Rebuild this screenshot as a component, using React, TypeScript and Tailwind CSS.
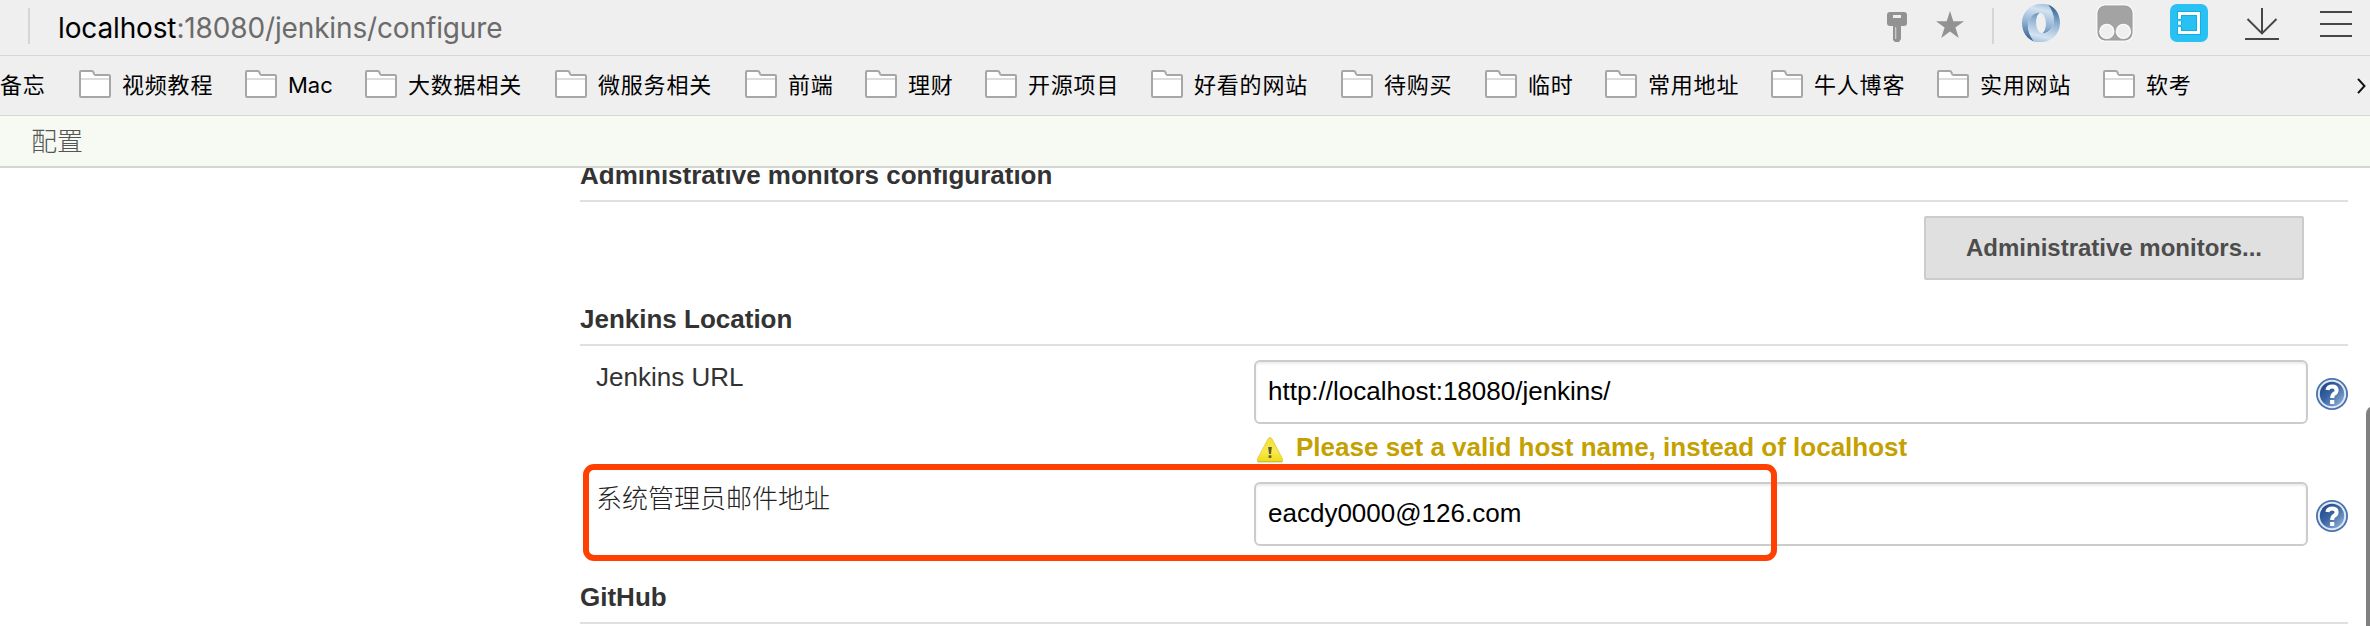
import React from "react";

const bookmarks = [
  { name: "视频教程", width: "w-[166px]" },
  { name: "Mac", width: "w-[120px] tracking-[0px]" },
  { name: "大数据相关", width: "w-[190px]" },
  { name: "微服务相关", width: "w-[190px]" },
  { name: "前端", width: "w-[120px]" },
  { name: "理财", width: "w-[120px]" },
  { name: "开源项目", width: "w-[166px]" },
  { name: "好看的网站", width: "w-[190px]" },
  { name: "待购买", width: "w-[144px]" },
  { name: "临时", width: "w-[120px]" },
  { name: "常用地址", width: "w-[166px]" },
  { name: "牛人博客", width: "w-[166px]" },
  { name: "实用网站", width: "w-[166px]" },
  { name: "软考", width: "w-[120px]" },
];

function FolderIcon() {
  return (
    <svg className="block shrink-0" width="32" height="28" viewBox="0 0 32 28">
      <path d="M1 26V2.2Q1 1 2.2 1H12.6Q14 1 14.6 2.6L15 4Q15.4 5 16.6 5H29.8Q31 5 31 6.2V25.8Q31 27 29.8 27H2.2Q1 27 1 25.8Z" fill="#fff" stroke="#a6a6a6" strokeWidth="2" />
      <path d="M2 9H30" stroke="#dcdcdc" strokeWidth="2" />
    </svg>
  );
}

function KeyIcon() {
  return (
    <svg className="block" width="20" height="30" viewBox="0 0 20 30">
      <path fillRule="evenodd" d="M3 0H17Q20 0 20 3V11Q20 14 17 14H14V27L12 30H8L6 28V14H3Q0 14 0 11V3Q0 0 3 0ZM6 3V6H14V3ZM8.4 15V27H9.2V15Z" fill="#929292" />
    </svg>
  );
}

function StarIcon() {
  return (
    <svg className="block" width="28" height="28" viewBox="0 0 28 28">
      <path d="M14 0L17.3 10.2H28L19.4 16.6L22.8 27L14 20.6L5.2 27L8.6 16.6L0 10.2H10.7Z" fill="#929292" />
    </svg>
  );
}

const swirlArm =
  "M26 0.5C12 -3 0 6 0 19C0 28 5 35 12 37.5C7 31 5 24 6.5 18C8 12 13 8.5 18 8.7C25.5 10 25.5 27 20 29.3C25 29.5 30 26 31.5 20C33 14 31 7 26 0.5Z";

function SwirlIcon() {
  return (
    <svg className="block" width="38" height="38" viewBox="0 0 38 38">
      <defs>
        <linearGradient id="swirl" x1="0.6" y1="0" x2="0.4" y2="1">
          <stop offset="0" stopColor="#a9c6e0" />
          <stop offset="0.15" stopColor="#d3e3f1" />
          <stop offset="0.55" stopColor="#8fb2d4" />
          <stop offset="1" stopColor="#34618f" />
        </linearGradient>
      </defs>
      <path d={swirlArm} fill="url(#swirl)" />
      <path d={swirlArm} fill="url(#swirl)" transform="rotate(180 19 19)" />
    </svg>
  );
}

function GoggleIcon() {
  return (
    <svg className="block" width="38" height="38" viewBox="0 0 38 38">
      <rect x="1" y="1" width="36" height="36" rx="8" fill="#a3a3a3" stroke="#fafafa" strokeWidth="1.5" />
      <rect x="2" y="2" width="34" height="34" rx="7" fill="none" stroke="#999" strokeWidth="0.8" />
      <circle cx="10.8" cy="27.4" r="7" fill="#efefef" stroke="#fafafa" strokeWidth="1.4" />
      <circle cx="27.4" cy="27.4" r="7" fill="#efefef" stroke="#fafafa" strokeWidth="1.4" />
    </svg>
  );
}

function CaptureIcon() {
  return (
    <svg className="block" width="38" height="38" viewBox="0 0 38 38">
      <rect width="38" height="38" rx="7" fill="#29c1f4" />
      <path d="M9.5 15.5V9.5H28.5V28.5H9.5V22.5M9.5 17V21" fill="none" stroke="#12aee4" strokeWidth="5" />
      <path d="M9.5 15V9.5H28.5V28.5H9.5V23M9.5 17.2V20.8" fill="none" stroke="#fff" strokeWidth="3" />
    </svg>
  );
}

function DownloadIcon() {
  return (
    <svg className="block" width="34" height="32" viewBox="0 0 34 32" fill="none" stroke="#464646" strokeWidth="2">
      <path d="M17 0V25M2.5 11L17 25.4L31.5 11M0 31H34" />
    </svg>
  );
}

function MenuIcon() {
  return (
    <svg className="block" width="32" height="26" viewBox="0 0 32 26" stroke="#464646" strokeWidth="2">
      <path d="M0 1H32M0 13H32M0 25H32" />
    </svg>
  );
}

function WarningIcon() {
  return (
    <svg className="block shrink-0" width="28" height="27" viewBox="0 0 28 27">
      <defs>
        <linearGradient id="warn" x1="0" y1="0" x2="0" y2="1">
          <stop offset="0" stopColor="#f3df3c" />
          <stop offset="0.6" stopColor="#f7e94f" />
          <stop offset="1" stopColor="#efdc12" />
        </linearGradient>
      </defs>
      <path d="M14 1.5Q15.3 1.5 16 3L26.6 23Q27.4 25.6 25 25.6H3Q0.6 25.6 1.4 23L12 3Q12.7 1.5 14 1.5Z" fill="url(#warn)" stroke="#e3d24a" strokeWidth="1" />
      <path d="M1.5 25.8H26.5" stroke="#c3b228" strokeWidth="1" />
      <path d="M12.2 11H15.8L15 18H13Z" fill="#5d5a2c" />
      <rect x="12.6" y="19.3" width="2.8" height="2.6" fill="#5d5a2c" />
    </svg>
  );
}

function HelpIcon({ id }: { id: string }) {
  return (
    <svg className="block shrink-0" width="32" height="32" viewBox="0 0 32 32">
      <defs>
        <linearGradient id={id} x1="0.1" y1="0.1" x2="0.9" y2="0.9">
          <stop offset="0" stopColor="#1f4788" />
          <stop offset="0.45" stopColor="#3a65a3" />
          <stop offset="1" stopColor="#8fb0d8" />
        </linearGradient>
      </defs>
      <circle cx="16" cy="16" r="16" fill="#4a72ad" />
      <circle cx="16" cy="16" r="13.2" fill={`url(#${id})`} stroke="#dfe8f3" strokeWidth="2" />
      <path d="M11.4 12Q12 8.4 16.2 8.4Q20.6 8.4 20.6 12Q20.6 14.4 18.2 15.8Q16.2 17 16.2 20" fill="none" stroke="#fff" strokeWidth="4" />
      <rect x="14.1" y="22" width="4.2" height="4" fill="#fff" />
    </svg>
  );
}

function SectionTitle({ children }: { children: React.ReactNode }) {
  return (
    <h2 className="h-[42px] shrink-0 border-b-2 border-[#e0e0e0] text-[26px] leading-[30px] font-bold text-[#333]">
      {children}
    </h2>
  );
}

function TextField({ value }: { value: string }) {
  return (
    <div className="flex h-16 w-[1054px] items-center rounded-[6px] border-2 border-[#ccc] bg-white pb-[2px] pl-[12px] text-[26px] leading-[30px] text-black shadow-[inset_0_2px_2px_rgba(0,0,0,0.075)]">
      {value}
    </div>
  );
}

export default function App() {
  return (
    <div className="relative flex h-[626px] w-[2370px] flex-col overflow-hidden bg-white font-['Liberation_Sans','Noto_Sans_CJK_SC',sans-serif]">
      <header className="flex h-14 shrink-0 items-start border-b border-[#d6d6d6] bg-[#efefef]">
        <div className="mt-2 ml-7 h-9 w-0.5 bg-[#d6d6d6]" />
        <div className="mt-2 ml-7 font-['Inter',sans-serif] text-[28px] leading-[40px] tracking-[-0.14px] whitespace-nowrap text-[#6b6b6b]">
          <span className="text-black">localhost</span>:18080/jenkins/configure
        </div>
        <div className="ml-auto flex items-start pr-[18px]">
          <div className="mt-3 w-[49px]"><KeyIcon /></div>
          <div className="mt-[11px] w-14"><StarIcon /></div>
          <div className="mt-2 mr-7 h-9 w-0.5 bg-[#d6d6d6]" />
          <div className="mt-1 w-[74px]"><SwirlIcon /></div>
          <div className="mt-1 w-[74px]"><GoggleIcon /></div>
          <div className="mt-1 w-[75px]"><CaptureIcon /></div>
          <div className="mt-2 w-[75px]"><DownloadIcon /></div>
          <div className="mt-[11px]"><MenuIcon /></div>
        </div>
      </header>

      <nav className="flex h-[60px] shrink-0 items-center border-b border-[#d6d6d6] bg-[#efefef] font-['Inter','Noto_Sans_CJK_SC',sans-serif] text-[22px] leading-[30px] tracking-[0.8px] whitespace-nowrap text-black">
        <div className="w-[79px] pb-px">备忘</div>
        {bookmarks.map((b) => (
          <div key={b.name} className={`flex shrink-0 items-center gap-[11px] pb-[3px] ${b.width}`}>
            <FolderIcon />
            <span className="pt-[2px]">{b.name}</span>
          </div>
        ))}
        <svg className="mt-px mr-1 ml-auto block" width="9" height="16" viewBox="0 0 9 16" fill="none" stroke="#111" strokeWidth="2">
          <path d="M1 0.8L7.5 8L1 15.2" />
        </svg>
      </nav>

      <div className="flex h-[52px] shrink-0 items-center border-b-2 border-[#d3d6cf] bg-[#f6faf2] pt-[2px] pl-[31px] text-[26px] leading-[40px] font-light text-[#555]">
        配置
      </div>

      <main className="flex h-[458px] shrink-0 flex-col overflow-hidden pr-[22px] pl-[580px]">
        <div className="-mt-2 shrink-0">
          <SectionTitle>Administrative monitors configuration</SectionTitle>
        </div>
        <div className="mt-[14px] mr-11 flex h-16 w-[380px] shrink-0 items-center justify-center self-end rounded-[2px] border-2 border-[#ccc] bg-[#e0e0e0] text-[24px] leading-[28px] font-bold text-[#4d4d4d]">
          Administrative monitors...
        </div>
        <div className="mt-6 shrink-0">
          <SectionTitle>Jenkins Location</SectionTitle>
        </div>
        <div className="mt-[14px] flex h-[122px] shrink-0 items-start">
          <div className="w-[674px] pt-[2px] pl-[16px] text-[26px] leading-[30px] text-[#333]">Jenkins URL</div>
          <div className="flex flex-col">
            <TextField value="http://localhost:18080/jenkins/" />
            <div className="mt-[12px] flex items-start pl-[2px]">
              <WarningIcon />
              <span className="-mt-[4px] ml-[12px] text-[26px] leading-[30px] font-bold whitespace-nowrap text-[#c4a000]">Please set a valid host name, instead of localhost</span>
            </div>
          </div>
          <div className="mt-[18px] ml-2"><HelpIcon id="helpUrl" /></div>
        </div>
        <div className="flex h-[100px] shrink-0 items-start">
          <div className="w-[674px] pt-px pl-[16px] text-[26px] leading-[32px] font-light text-[#222]">系统管理员邮件地址</div>
          <TextField value="eacdy0000@126.com" />
          <div className="mt-[18px] ml-2"><HelpIcon id="helpMail" /></div>
        </div>
        <SectionTitle>GitHub</SectionTitle>
      </main>

      <div className="absolute top-[464px] left-[583px] h-[97px] w-[1194px] rounded-[11px] border-6 border-[#ff4000]" />
      <div className="absolute top-[406px] -right-3 h-[300px] w-4 rounded-[8px] bg-[#808080]" />
    </div>
  );
}
